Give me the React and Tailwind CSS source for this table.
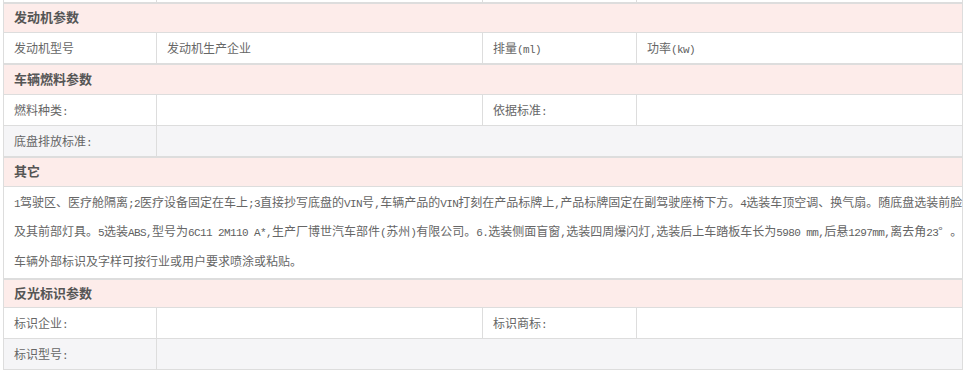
import React from "react";

const font = { fontFamily: '"Noto Sans CJK SC", "Liberation Sans", sans-serif' };

function T({ s }) {
  const runs = [];
  let buf = "";
  let mode = null;
  const flush = () => {
    if (buf) runs.push([mode, buf]);
    buf = "";
  };
  for (const ch of s) {
    const m = ch.charCodeAt(0) < 128 ? "a" : ch === "°" ? "d" : "c";
    if (m !== mode) {
      flush();
      mode = m;
    }
    buf += ch;
  }
  flush();
  return (
    <span className="whitespace-pre">
      {runs.map(([m, t], i) =>
        m === "a" ? (
          <span key={i} className="font-['Liberation_Mono',monospace] text-[11px] leading-[12px] tracking-[-0.6px] text-[#5f5f5f]">
            {t}
          </span>
        ) : m === "d" ? (
          <span key={i} className="inline-block w-[12px] leading-[12px] text-left">
            {t}
          </span>
        ) : (
          <span key={i}>{t}</span>
        )
      )}
    </span>
  );
}

function Header({ children, h }) {
  return (
    <div className={`${h} flex items-center bg-[#fdecea] border-b border-[#dddddd] pl-[10px] pb-[2px] text-[13px] font-bold text-[#555555]`}>
      {children}
    </div>
  );
}

const cell = "flex items-center px-[10px] pb-[1px]";

function Row4({ a, b, c, d, last }) {
  return (
    <div className={`flex ${last ? "h-[30px]" : "h-[31px] border-b border-[#dddddd]"}`}>
      <div className={`w-[153px] shrink-0 border-r border-[#dddddd] ${cell}`}><T s={a} /></div>
      <div className={`w-[326px] shrink-0 border-r border-[#dddddd] ${cell}`}><T s={b} /></div>
      <div className={`w-[154px] shrink-0 border-r border-[#dddddd] ${cell}`}><T s={c} /></div>
      <div className={`flex-1 ${cell}`}><T s={d} /></div>
    </div>
  );
}

function Row2({ a, last }) {
  return (
    <div className={`flex bg-[#f5f5f7] ${last ? "h-[30px]" : "h-[31px] border-b border-[#dddddd]"}`}>
      <div className={`w-[153px] shrink-0 border-r border-[#dddddd] ${cell}`}><T s={a} /></div>
      <div className="flex-1" />
    </div>
  );
}

const line1 = "1驾驶区、医疗舱隔离;2医疗设备固定在车上;3直接抄写底盘的VIN号,车辆产品的VIN打刻在产品标牌上,产品标牌固定在副驾驶座椅下方。4选装车顶空调、换气扇。随底盘选装前脸";
const line2 = "及其前部灯具。5选装ABS,型号为6C11 2M110 A*,生产厂博世汽车部件(苏州)有限公司。6.选装侧面盲窗,选装四周爆闪灯,选装后上车踏板车长为5980 mm,后悬1297mm,离去角23°。";
const line3 = "车辆外部标识及字样可按行业或用户要求喷涂或粘贴。";

export default function App() {
  return (
    <div className="bg-white w-[966px] h-[372px] overflow-hidden pl-[3px] text-[12px] text-[#666666]" style={font}>
      <div className="w-[960px]">
        {/* top partial strip */}
        <div className="flex h-[3px] border-x border-b border-[#dddddd]">
          <div className="w-[153px] border-r border-[#dddddd]" />
          <div className="w-[326px] border-r border-[#dddddd]" />
          <div className="w-[154px] border-r border-[#dddddd]" />
          <div className="flex-1" />
        </div>

        <div className="border border-[#dddddd]">
          <Header h="h-[29px]">发动机参数</Header>
          <Row4 a="发动机型号" b="发动机生产企业" c="排量(ml)" d="功率(kw)" last />
        </div>

        <div className="border border-[#dddddd]">
          <Header h="h-[30px]">车辆燃料参数</Header>
          <Row4 a="燃料种类:" b="" c="依据标准:" d="" />
          <Row2 a="底盘排放标准:" last />
        </div>

        <div className="border border-[#dddddd]">
          <Header h="h-[29px]">其它</Header>
          <div className="h-[91px] px-[10px] whitespace-nowrap">
            <div className="leading-[29px]"><T s={line1} /></div>
            <div className="leading-[30px]"><T s={line2} /></div>
            <div className="leading-[30px]"><T s={line3} /></div>
          </div>
        </div>

        <div className="border border-[#dddddd]">
          <Header h="h-[28px]">反光标识参数</Header>
          <Row4 a="标识企业:" b="" c="标识商标:" d="" />
          <Row2 a="标识型号:" last />
        </div>
      </div>
    </div>
  );
}
